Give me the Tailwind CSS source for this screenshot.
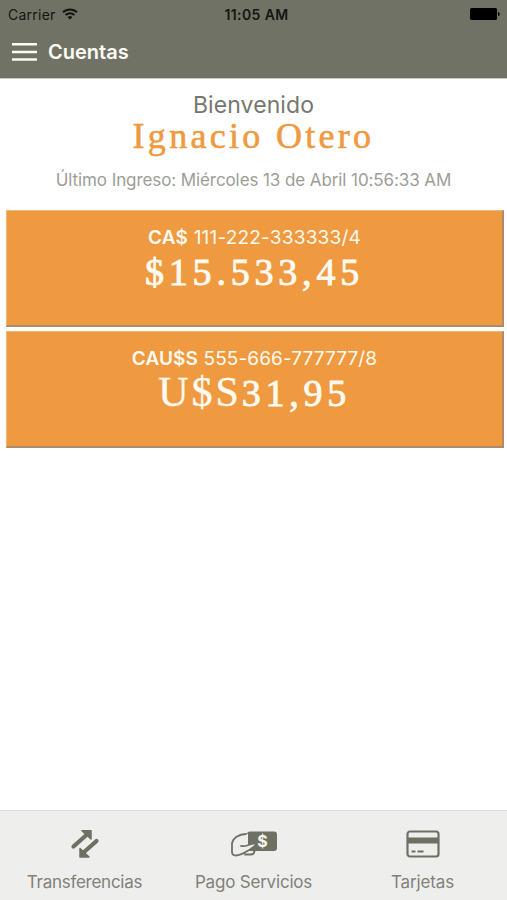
<!DOCTYPE html>
<html lang="es">
<head>
    <meta charset="UTF-8">
    <meta name="viewport" content="width=device-width, initial-scale=1.0">
    <title>Cuentas</title>
    <script src="https://cdn.jsdelivr.net/npm/@tailwindcss/browser@4"></script>
</head>
<body class="bg-white font-['Inter',sans-serif]">
    <div class="flex flex-col w-full h-[900px] overflow-hidden">
        <header class="h-[79px] shrink-0 bg-[#717266] border-b border-[#c9cabb]">
            <!-- Status bar -->
            <div class="grid grid-cols-3 items-center h-7 pl-2 pr-[7px] text-[14px] text-[#151510]">
                <div class="flex items-center gap-[6px]">
                    <span class="tracking-[0.25px]">Carrier</span>
                    <svg width="16" height="12" viewBox="0 0 16 12" fill="none" stroke="currentColor" stroke-width="2">
                        <path d="M1 4.3a10 10 0 0 1 14 0M3.6 7.1a6.2 6.2 0 0 1 8.8 0"/>
                        <path d="M8 11.6L5.6 9.2a3.4 3.4 0 0 1 4.8 0z" fill="currentColor" stroke="none"/>
                    </svg>
                </div>
                <span class="pl-[5px] text-center font-semibold tracking-[0.4px] whitespace-nowrap">11:05 AM</span>
                <svg class="justify-self-end" width="30" height="12" viewBox="0 0 30 12" fill="#000">
                    <rect width="27" height="12" rx="1.5"/>
                    <path d="M28 4c2.4 0 2.4 4 0 4z"/>
                </svg>
            </div>
            <div class="flex items-center h-12 pl-3 gap-[11px] text-[#fdfcf4]">
                <svg width="25" height="18" viewBox="0 0 25 18" fill="currentColor">
                    <path d="M0 0h25v2.5H0zM0 7.7h25v2.5H0zM0 15.3h25v2.5H0z"/>
                </svg>
                <h1 class="text-[20px] font-semibold">Cuentas</h1>
            </div>
        </header>

        <main class="flex-1">
            <section class="h-[131px] pt-[12px] text-center">
                <p class="text-[23px] leading-[28px] tracking-[0.1px] text-[#77776f]">Bienvenido</p>
                <h2 class="text-[36px] leading-[34px] tracking-[3.3px] text-[#ef9a41] font-['Liberation_Serif',serif] [-webkit-text-stroke:0.6px_#ef9a41]">Ignacio Otero</h2>
                <p class="mt-[15px] text-[17px] leading-6 tracking-[-0.09px] text-[#9d9d98]">Último Ingreso: Miércoles 13 de Abril 10:56:33 AM</p>
            </section>
            <section class="flex flex-col gap-1 pl-[6px] pr-[3px] text-center text-[#fffaf0]">
                <article class="h-[117px] pt-[13px] bg-[#ef9a41] border-t border-l border-t-[#f3b878] border-l-[#f3b878] border-r-2 border-b-2 border-r-[#b18a68] border-b-[#a98b70]">
                    <p class="text-[19px] leading-7 tracking-[0.2px]"><b class="font-semibold">CA$</b> 111-222-333333/4</p>
                    <p class="-mt-px text-[38px] leading-[42px] tracking-[4.8px] font-['Liberation_Serif',serif] [-webkit-text-stroke:0.9px_#fffaf0]">$15.533,45</p>
                </article>
                <article class="h-[117px] pt-[13px] bg-[#ef9a41] border-t border-l border-t-[#f3b878] border-l-[#f3b878] border-r-2 border-b-2 border-r-[#b18a68] border-b-[#a98b70]">
                    <p class="text-[19px] leading-7 tracking-[0.1px]"><b class="font-semibold">CAU$S</b> 555-666-777777/8</p>
                    <p class="-mt-[2px] text-[38px] leading-[42px] tracking-[4.7px] font-['Liberation_Serif',serif] [-webkit-text-stroke:0.9px_#fffaf0]"><span class="text-[42px] tracking-[3px] [-webkit-text-stroke:0.4px_#fffaf0]">U$S</span>31,95</p>
                </article>
            </section>
        </main>

        <nav class="grid grid-cols-3 h-[90px] shrink-0 border-t border-[#d9d9d8] bg-[#eeeeed] text-[17px] text-[#818179]">
            <a class="flex flex-col items-center pt-[15px]">
                <svg width="30" height="36" viewBox="0 0 30 36" fill="#6e7063" stroke="#6e7063" stroke-linecap="round" stroke-linejoin="round">
                    <path d="M3.5 20.5L17 8.500M26.500 15L13 27" stroke-width="4.2"/>
                    <path d="M12 4.700h9V13zM10 22.500V31h9z" stroke-width="1.500"/>
                </svg>
                <span class="mt-2 leading-6 tracking-[-0.27px]">Transferencias</span>
            </a>
            <a class="flex flex-col items-center pt-[15px]">
                <svg width="48" height="36" viewBox="0 0 48 36" fill="none">
                    <rect x="17" y="5.5" width="30" height="19.5" rx="3" fill="#6e7063"/>
                    <path d="M18 8Q8 7 2.5 17L2 26q.5 3.500 4 3.500c6 0 9-3 14-5.500l5-4.500q1.500-2.500-1-2.500L18 19z" fill="#eeeeed"/>
                    <path d="M16 8C9 8 2.500 12 2 18v8q0 3.500 4 3.500c6 0 9-3.500 14-6l4.800-3.500q1.500-2.800-1-2.500L17 19.500q-3 1-6 .3M15 28.500h6q3 0 3.500-3.500" stroke="#6e7063" stroke-width="1.800" stroke-linecap="round" stroke-linejoin="round"/>
                    <text x="32.5" y="21" text-anchor="middle" fill="#f4f4ee" class="text-[16px] font-bold">$</text>
                </svg>
                <span class="mt-2 leading-6 tracking-[-0.2px]">Pago Servicios</span>
            </a>
            <a class="flex flex-col items-center pt-[15px]">
                <svg width="34" height="36" viewBox="0 0 34 36" fill="none">
                    <rect x="1.500" y="5.500" width="31" height="25" rx="2.500" stroke="#6e7063" stroke-width="2.200"/>
                    <path d="M1 11.500h32v6H1zM5.500 24.500h4v2h-4zM11.500 24.500h6v2h-6z" fill="#6e7063"/>
                </svg>
                <span class="mt-2 leading-6 tracking-[-0.15px]">Tarjetas</span>
            </a>
        </nav>
    </div>
</body>
</html>
